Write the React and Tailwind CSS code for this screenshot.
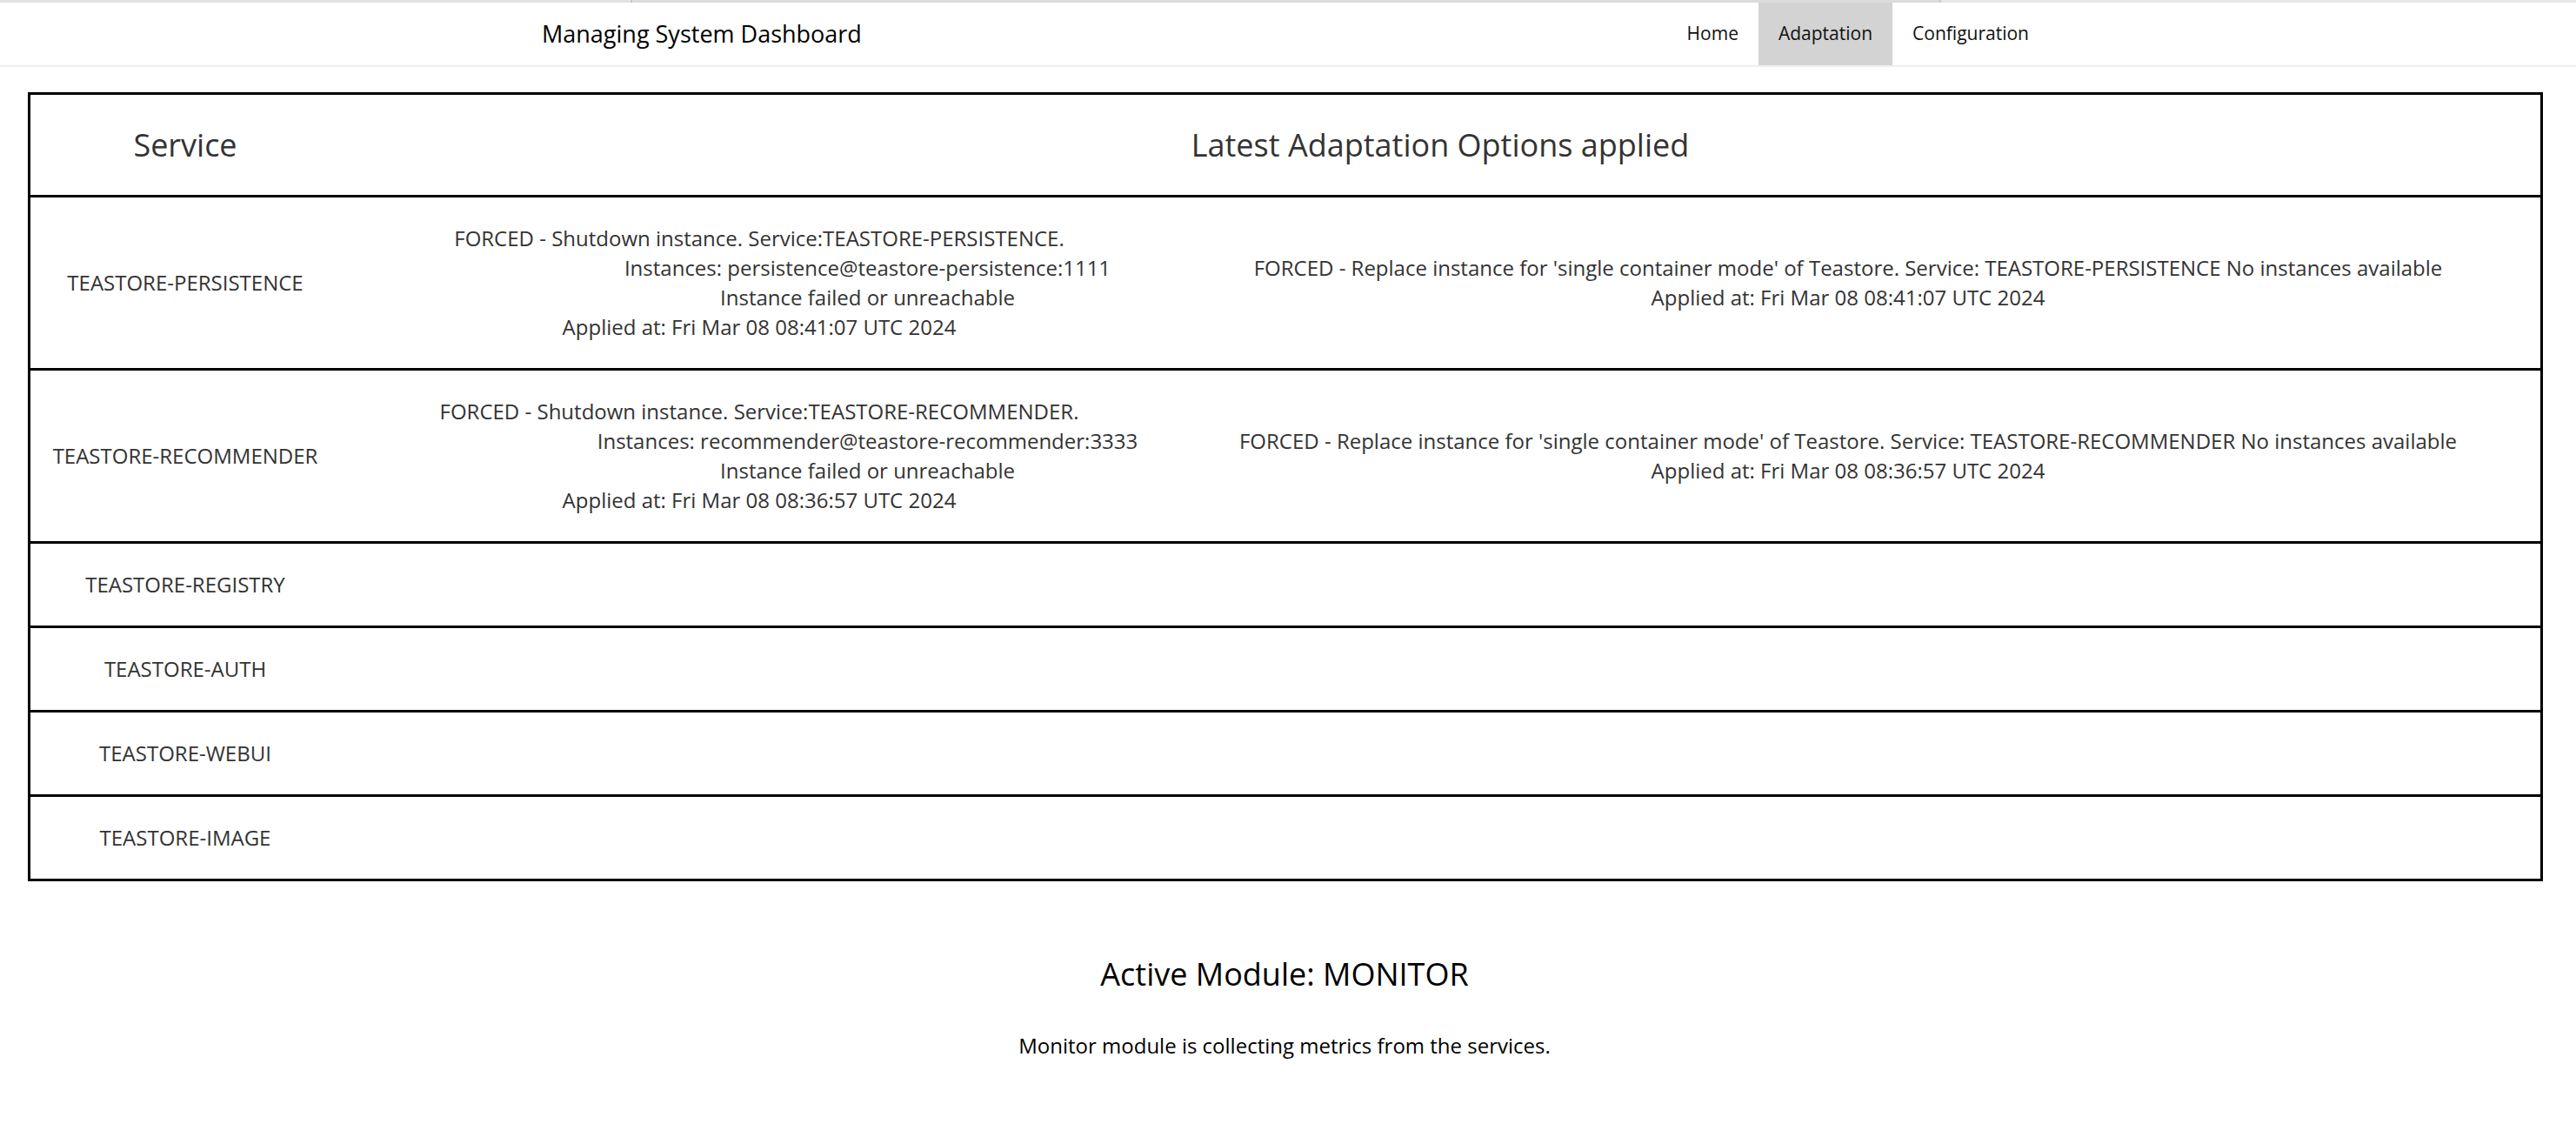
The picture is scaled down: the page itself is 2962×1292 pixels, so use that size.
import React from "react";

const rows = [
  {
    name: "TEASTORE-PERSISTENCE",
    a: [
      "FORCED - Shutdown instance. Service:TEASTORE-PERSISTENCE.",
      "Instances: persistence@teastore-persistence:1111",
      "Instance failed or unreachable",
      "Applied at: Fri Mar 08 08:41:07 UTC 2024",
    ],
    b: [
      "FORCED - Replace instance for 'single container mode' of Teastore. Service: TEASTORE-PERSISTENCE No instances available",
      "Applied at: Fri Mar 08 08:41:07 UTC 2024",
    ],
  },
  {
    name: "TEASTORE-RECOMMENDER",
    a: [
      "FORCED - Shutdown instance. Service:TEASTORE-RECOMMENDER.",
      "Instances: recommender@teastore-recommender:3333",
      "Instance failed or unreachable",
      "Applied at: Fri Mar 08 08:36:57 UTC 2024",
    ],
    b: [
      "FORCED - Replace instance for 'single container mode' of Teastore. Service: TEASTORE-RECOMMENDER No instances available",
      "Applied at: Fri Mar 08 08:36:57 UTC 2024",
    ],
  },
  { name: "TEASTORE-REGISTRY" },
  { name: "TEASTORE-AUTH" },
  { name: "TEASTORE-WEBUI" },
  { name: "TEASTORE-IMAGE" },
];

export default function App() {
  return (
    <div className="min-h-[1292px] w-[2962px] bg-white font-['Open_Sans',sans-serif]">
      <div className="flex h-[3px] w-full">
        <div className="w-[725px] bg-[#e2e2e2]" />
        <div className="w-[2px] bg-[#c8c8c8]" />
        <div className="w-[1503px] bg-[#dcdcdc]" />
        <div className="w-[2px] bg-[#c8c8c8]" />
        <div className="flex-1 bg-[#e8e8e8]" />
      </div>
      <header className="flex h-[74px] items-stretch border-b-2 border-[#efefef]">
        <div className="ml-[623px] flex items-center text-[27px] text-black">
          Managing System Dashboard
        </div>
        <nav className="ml-auto mr-[606px] flex items-stretch text-[21px] text-[#111]">
          <a className="flex items-center px-[23px]">Home</a>
          <a className="flex items-center bg-[#d3d3d3] px-[23px]">Adaptation</a>
          <a className="flex items-center px-[23px]">Configuration</a>
        </nav>
      </header>

      <div className="ml-[32px] mt-[29px] w-[2892px] border-[3px] border-black text-[#333]">
        <div className="grid grid-cols-[356px_1fr] py-[30px] text-[36px] leading-[55px]">
          <div className="text-center">Service</div>
          <div className="text-center">Latest Adaptation Options applied</div>
        </div>
        {rows.map((r) => (
          <div
            key={r.name}
            className="grid grid-cols-[356px_964px_1fr] items-center border-t-[3px] border-black py-[30px] text-[24px] leading-[34px]"
          >
            <div className="text-center">{r.name}</div>
            <div className="text-center">
              {r.a &&
                r.a.map((l, i) => (
                  <div key={i} className={i === 1 || i === 2 ? "pl-[249px]" : ""}>
                    {l}
                  </div>
                ))}
            </div>
            <div className="pr-[26px] text-center">
              {r.b && r.b.map((l, i) => <div key={i}>{l}</div>)}
            </div>
          </div>
        ))}
      </div>

      <div className="mt-[82px] pr-[8px] text-center text-[36px] leading-[49px] text-black">
        Active Module: MONITOR
      </div>
      <div className="mt-[41px] pr-[8px] text-center text-[24px] leading-[34px] text-black">
        Monitor module is collecting metrics from the services.
      </div>
    </div>
  );
}
